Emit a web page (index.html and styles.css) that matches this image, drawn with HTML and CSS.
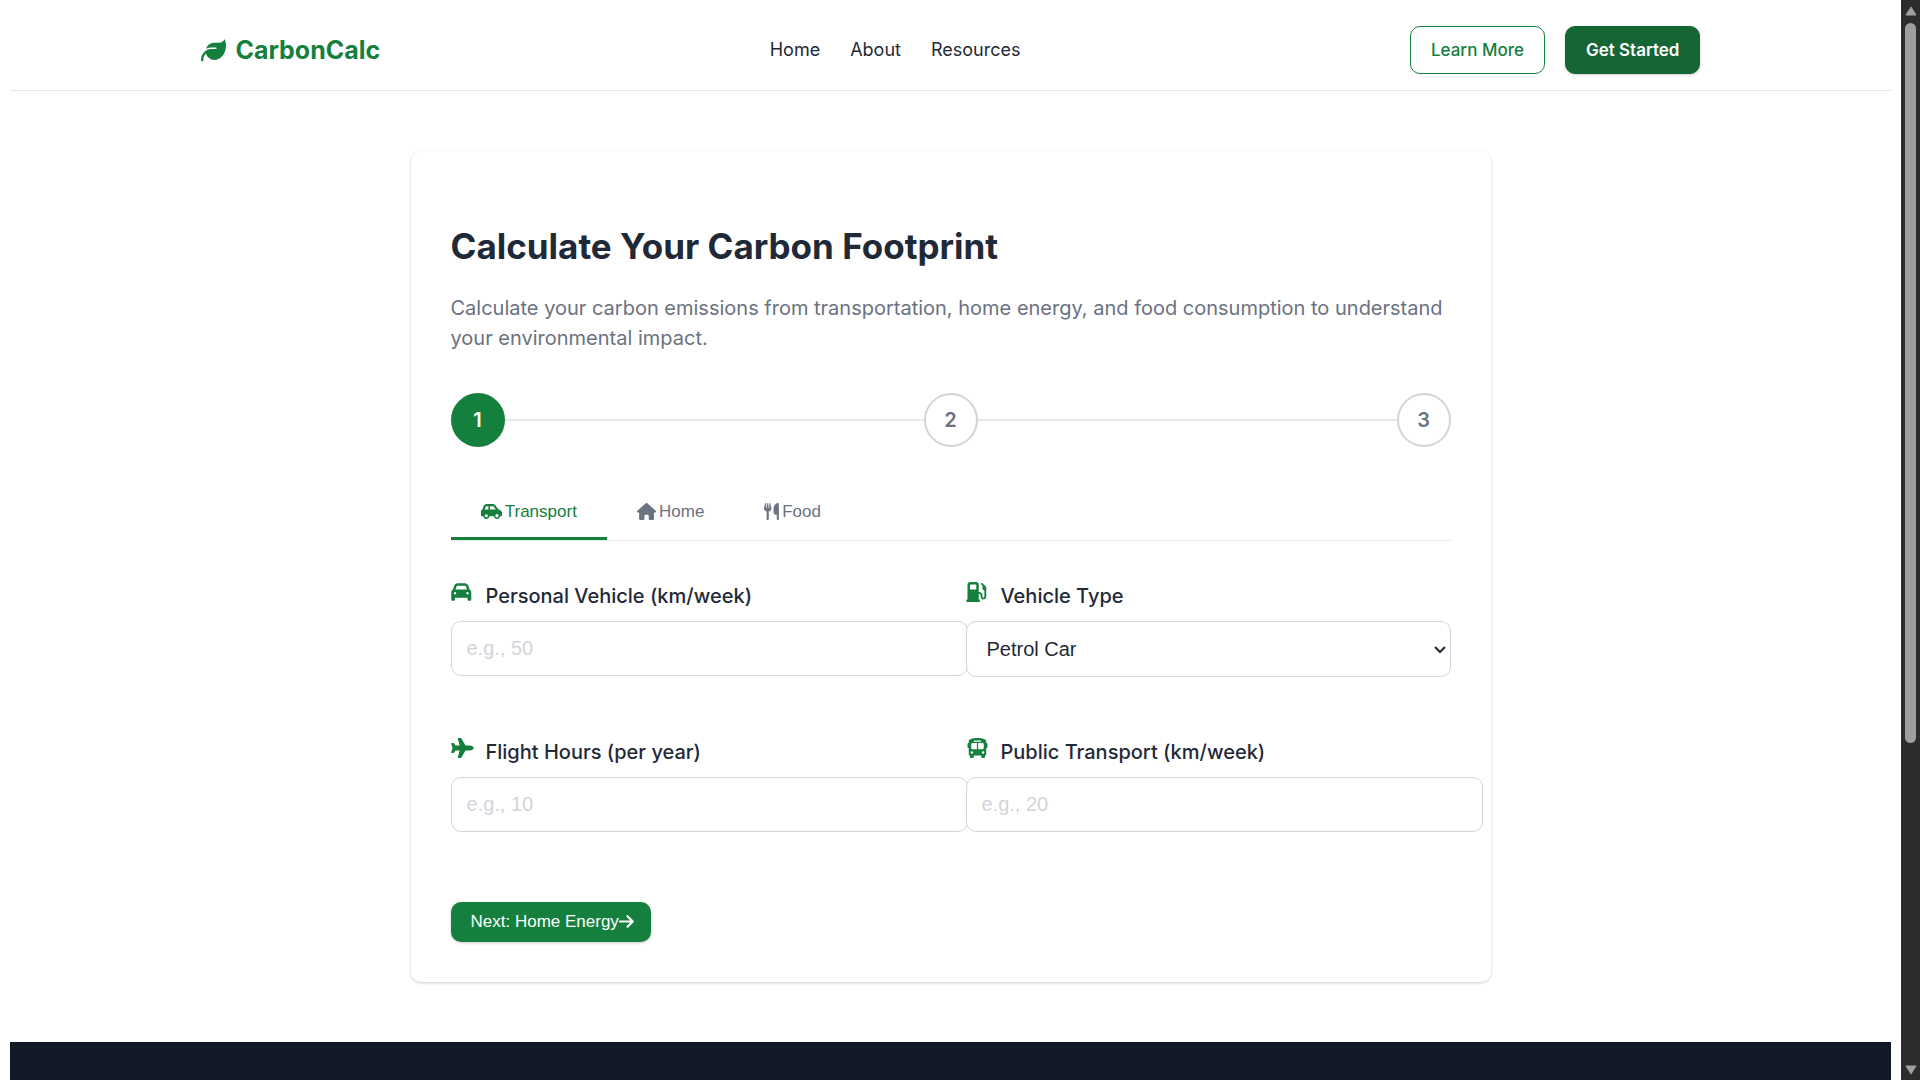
FILE: index.html
```html
<!DOCTYPE html>
<html lang="en">
<head>
<meta charset="utf-8">
<meta name="viewport" content="width=device-width, initial-scale=1">
<title>CarbonCalc</title>
<link rel="stylesheet" href="styles.css">
</head>
<body>
<div class="page">
  <header class="site-header">
    <div class="header-inner">
      <a class="logo" href="#">
        <svg class="logo-icon" viewBox="0 0 512 512" aria-hidden="true"><path d="M272 96c-78.6 0-145.1 51.5-167.7 122.5c33.6-17 71.5-26.5 111.7-26.5h88c8.8 0 16 7.2 16 16s-7.2 16-16 16H288 216s0 0 0 0c-16.6 0-32.7 1.9-48.3 5.4c-25.9 5.9-49.9 16.4-71.4 30.7c0 0 0 0 0 0C38.3 298.8 0 364.9 0 440v16c0 13.3 10.7 24 24 24s24-10.7 24-24V440c0-48.7 20.7-92.5 53.8-123.2C121.6 392.3 190.3 448 272 448l1 0c132.1-.7 239-130.9 239-291.4c0-42.6-7.5-83.1-21.1-119.6c-2.6-6.9-12.7-6.6-16.2-.1C455.9 72.1 418.7 96 376 96L272 96z"/></svg>
        <span>CarbonCalc</span>
      </a>
      <nav class="nav">
        <a href="#">Home</a>
        <a href="#">About</a>
        <a href="#">Resources</a>
      </nav>
      <div class="header-actions">
        <a class="action action-outline" href="#">Learn More</a>
        <a class="action action-solid" href="#">Get Started</a>
      </div>
    </div>
  </header>

  <main class="card">
    <h1>Calculate Your Carbon Footprint</h1>
    <p class="intro">Calculate your carbon emissions from transportation, home energy, and food consumption to understand your environmental impact.</p>

    <div class="steps">
      <span class="step step-active">1</span>
      <span class="step-line"></span>
      <span class="step">2</span>
      <span class="step-line"></span>
      <span class="step">3</span>
    </div>

    <div class="tabs" role="tablist">
      <button class="tab tab-active" type="button" role="tab" aria-selected="true">
        <svg class="tab-icon" viewBox="0 0 640 512" aria-hidden="true"><path d="M171.3 96H224v96H111.3l30.4-75.9C146.5 104 158.2 96 171.3 96zM272 192V96h81.2c9.7 0 18.9 4.4 25 12l67 84H272zm256.2 1L428.2 68c-18.2-22.8-45.8-36-75-36H171.3c-39.3 0-74.6 23.9-89.1 60.3L40.6 196.4C16.8 205.8 0 228.9 0 256V368c0 17.7 14.3 32 32 32H65.3c7.6 45.4 47.1 80 94.7 80s87.1-34.6 94.7-80H385.3c7.6 45.4 47.1 80 94.7 80s87.1-34.6 94.7-80H608c17.7 0 32-14.3 32-32V320c0-65.2-48.8-119-111.8-127zM434.7 368a48 48 0 1 1 90.5 32 48 48 0 1 1 -90.5-32zM160 336a48 48 0 1 1 0 96 48 48 0 1 1 0-96z"/></svg>
        <span>Transport</span>
      </button>
      <button class="tab" type="button" role="tab" aria-selected="false">
        <svg class="tab-icon" viewBox="0 0 576 512" aria-hidden="true"><path d="M575.8 255.5c0 18-15 32.1-32 32.1h-32l.7 160.2c0 2.7-.2 5.4-.5 8.1V472c0 22.1-17.9 40-40 40H456c-1.1 0-2.2 0-3.3-.1c-1.4 .1-2.8 .1-4.2 .1H416 392c-22.1 0-40-17.9-40-40V448 384c0-17.7-14.3-32-32-32H256c-17.7 0-32 14.3-32 32v64 24c0 22.1-17.9 40-40 40H160 128.1c-1.5 0-3-.1-4.5-.2c-1.2 .1-2.4 .2-3.6 .2H104c-22.1 0-40-17.9-40-40V360c0-.9 0-1.9 .1-2.8V287.6H32c-18 0-32-14-32-32.1c0-9 3-17 10-24L266.4 8c7-7 15-8 22-8s15 2 21 7L564.8 231.5c8 7 12 15 11 24z"/></svg>
        <span>Home</span>
      </button>
      <button class="tab" type="button" role="tab" aria-selected="false">
        <svg class="tab-icon" viewBox="0 0 448 512" aria-hidden="true"><path d="M416 0C400 0 288 32 288 176V288c0 35.3 28.7 64 64 64h32V480c0 17.7 14.3 32 32 32s32-14.3 32-32V352 240 32c0-17.7-14.3-32-32-32zM64 16C64 7.8 57.9 1 49.7 .1S34.2 4.6 32.4 12.5L2.1 148.8C.7 155.1 0 161.5 0 167.9c0 45.9 35.1 83.6 80 87.7V480c0 17.7 14.3 32 32 32s32-14.3 32-32V255.6c44.9-4.1 80-41.8 80-87.7c0-6.4-.7-12.8-2.1-19.1L191.6 12.5c-1.8-8-9.3-13.3-17.4-12.4S160 7.8 160 16V150.2c0 5.4-4.4 9.8-9.8 9.8c-5.1 0-9.3-3.9-9.8-9L127.9 14.6C127.2 6.3 120.3 0 112 0s-15.2 6.3-15.9 14.6L83.7 151c-.5 5.1-4.7 9-9.8 9c-5.4 0-9.8-4.4-9.8-9.8V16z"/></svg>
        <span>Food</span>
      </button>
    </div>

    <form>
      <div class="fields">
        <div class="field">
          <label for="vehicle-km">
            <svg class="field-icon" viewBox="0 0 576 512" aria-hidden="true"><path d="M135.2 117.4L109.1 192H402.9l-26.1-74.6C372.3 104.6 360.2 96 346.6 96H165.4c-13.6 0-25.7 8.6-30.2 21.4zM39.6 196.8L74.8 96.3C88.3 57.8 124.6 32 165.4 32H346.6c40.8 0 77.1 25.8 90.6 64.3l35.2 100.5c23.2 9.6 39.6 32.5 39.6 59.2V400v48c0 17.7-14.3 32-32 32H448c-17.7 0-32-14.3-32-32V400H96v48c0 17.7-14.3 32-32 32H32c-17.7 0-32-14.3-32-32V400 256c0-26.7 16.4-49.6 39.6-59.2zM128 288a32 32 0 1 0 -64 0 32 32 0 1 0 64 0zm288 32a32 32 0 1 0 0-64 32 32 0 1 0 0 64z"/></svg>
            <span>Personal Vehicle (km/week)</span>
          </label>
          <input id="vehicle-km" type="text" inputmode="numeric" placeholder="e.g., 50">
        </div>
        <div class="field">
          <label for="vehicle-type">
            <svg class="field-icon" viewBox="0 0 576 512" aria-hidden="true"><path d="M32 64C32 28.7 60.7 0 96 0H256c35.3 0 64 28.7 64 64V256h8c48.6 0 88 39.4 88 88v32c0 13.3 10.7 24 24 24s24-10.7 24-24V222c-27.6-7.1-48-32.2-48-62V96L384 64c-8.8-8.8-8.8-23.2 0-32s23.2-8.8 32 0l77.3 77.3c12 12 18.7 28.3 18.7 45.3V168v24 32V376c0 39.8-32.2 72-72 72s-72-32.2-72-72V344c0-22.1-17.9-40-40-40h-8V448c17.7 0 32 14.3 32 32s-14.3 32-32 32H32c-17.7 0-32-14.3-32-32s14.3-32 32-32V64zM96 80v96c0 8.8 7.2 16 16 16H240c8.8 0 16-7.2 16-16V80c0-8.8-7.2-16-16-16H112c-8.8 0-16 7.2-16 16z"/></svg>
            <span>Vehicle Type</span>
          </label>
          <div class="select-wrap">
            <select id="vehicle-type">
              <option>Petrol Car</option>
              <option>Diesel Car</option>
              <option>Electric Car</option>
            </select>
            <svg class="chevron" viewBox="0 0 12 8" aria-hidden="true"><path d="M1 1l5 5 5-5"/></svg>
          </div>
        </div>
        <div class="field">
          <label for="flight-hours">
            <svg class="field-icon" viewBox="0 0 576 512" aria-hidden="true"><path d="M482.3 192c34.2 0 93.7 29 93.7 64c0 36-59.5 64-93.7 64l-116.6 0L265.2 495.9c-5.7 10-16.3 16.1-27.8 16.1l-56.2 0c-10.6 0-18.3-10.2-15.4-20.4l49-171.6L112 320 68.8 377.6c-3 4-7.8 6.4-12.8 6.4l-42 0c-7.8 0-14-6.3-14-14c0-1.3 .2-2.6 .5-3.9L32 256 .5 145.9c-.4-1.3-.5-2.6-.5-3.9c0-7.8 6.3-14 14-14l42 0c5 0 9.8 2.4 12.8 6.4L112 192l102.9 0-49-171.6C162.9 10.2 170.6 0 181.2 0l56.2 0c11.5 0 22.1 6.2 27.8 16.1L365.7 192l116.6 0z"/></svg>
            <span>Flight Hours (per year)</span>
          </label>
          <input id="flight-hours" type="text" inputmode="numeric" placeholder="e.g., 10">
        </div>
        <div class="field">
          <label for="transit-km">
            <svg class="field-icon" viewBox="0 0 576 512" aria-hidden="true"><path d="M288 0C422.4 0 512 35.2 512 80V96l0 32c17.7 0 32 14.3 32 32v64c0 17.7-14.3 32-32 32l0 160c0 17.7-14.3 32-32 32v32c0 17.7-14.3 32-32 32H416c-17.7 0-32-14.3-32-32V448H192v32c0 17.7-14.3 32-32 32H128c-17.7 0-32-14.3-32-32l0-32c-17.7 0-32-14.3-32-32l0-160c-17.7 0-32-14.3-32-32V160c0-17.7 14.3-32 32-32h0V96h0V80C64 35.2 153.6 0 288 0zM128 160v96c0 17.7 14.3 32 32 32H272V128H160c-17.7 0-32 14.3-32 32zM304 288H416c17.7 0 32-14.3 32-32V160c0-17.7-14.3-32-32-32H304V288zM144 400a32 32 0 1 0 0-64 32 32 0 1 0 0 64zm288 0a32 32 0 1 0 0-64 32 32 0 1 0 0 64zM384 80c0-8.8-7.2-16-16-16H208c-8.8 0-16 7.2-16 16s7.2 16 16 16H368c8.8 0 16-7.2 16-16z"/></svg>
            <span>Public Transport (km/week)</span>
          </label>
          <input id="transit-km" type="text" inputmode="numeric" placeholder="e.g., 20">
        </div>
      </div>
      <button class="next" type="button">
        <span>Next: Home Energy</span>
        <svg class="next-icon" viewBox="0 0 448 512" aria-hidden="true"><path d="M438.6 278.6c12.5-12.5 12.5-32.8 0-45.3l-160-160c-12.5-12.5-32.8-12.5-45.3 0s-12.5 32.8 0 45.3L338.8 224 32 224c-17.7 0-32 14.3-32 32s14.3 32 32 32l306.7 0L233.4 393.4c-12.5 12.5-12.5 32.8 0 45.3s32.8 12.5 45.3 0l160-160z"/></svg>
      </button>
    </form>
  </main>

  <footer class="site-footer"></footer>
</div>
<div class="scrollbar" aria-hidden="true">
  <svg class="scroll-arrow" viewBox="0 0 12 10"><path d="M6 1L11 9H1z"/></svg>
  <div class="scroll-thumb"></div>
  <div class="scroll-rest"></div>
  <svg class="scroll-arrow" viewBox="0 0 12 10"><path d="M6 9L11 1H1z"/></svg>
</div>
</body>
</html>
```
FILE: styles.css
```css
:root {
  --green: #15803d;
  --green-dark: #166534;
  --ink: #1f2937;
  --muted: #6b7280;
  --line: #e5e7eb;
  --outline: #d1d5db;
  --ui: "Liberation Sans", Arial, sans-serif;
}

body {
  margin: 0;
  display: flex;
  min-height: 100vh;
  background: #fff;
  color: var(--ink);
  font: 20px/30px Inter, sans-serif;
}

a {
  color: inherit;
  text-decoration: none;
}

svg {
  fill: currentColor;
  flex: none;
}

.page {
  flex: 1;
  display: flex;
  flex-direction: column;
  min-width: 0;
  padding: 10px 10px 0;
}

/* Header */
.site-header {
  padding: 16px 20px;
  border-bottom: 1px solid var(--line);
}

.header-inner {
  display: flex;
  align-items: center;
  justify-content: space-between;
  max-width: 1500px;
  margin: 0 auto;
}

.logo {
  display: flex;
  align-items: center;
  gap: 10px;
  color: var(--green);
  font-size: 25px;
  font-weight: 700;
}

.logo-icon {
  width: 25px;
  height: 25px;
}

.nav {
  display: flex;
  gap: 30px;
  font-size: 18px;
}

.header-actions {
  display: flex;
  gap: 20px;
}

.action {
  padding: 8px 20px;
  border: 1px solid var(--green);
  border-radius: 10px;
  font-size: 17px;
  font-weight: 500;
}

.action-outline {
  color: var(--green);
}

.action-solid {
  border-color: var(--green-dark);
  background: var(--green-dark);
  color: #fff;
  font-weight: 600;
  box-shadow: 0 1px 3px rgba(0, 0, 0, 0.2);
}

/* Calculator card */
.card {
  box-sizing: border-box;
  width: 100%;
  max-width: 1080px;
  margin: 60px auto;
  padding: 40px;
  border-radius: 10px;
  box-shadow: 0 1px 3px rgba(0, 0, 0, 0.2);
}

h1 {
  margin: 28px 0 20px;
  font-size: 35px;
  line-height: 54px;
  font-weight: 700;
}

.intro {
  margin: 0 0 40px;
  color: var(--muted);
}

.steps {
  display: flex;
  align-items: center;
  margin-bottom: 40px;
}

.step {
  display: flex;
  align-items: center;
  justify-content: center;
  width: 50px;
  height: 50px;
  border: 2px solid var(--outline);
  border-radius: 50%;
  color: var(--muted);
  font-weight: 600;
}

.step-active {
  border-color: var(--green);
  background: var(--green);
  color: #fff;
}

.step-line {
  flex: 1;
  height: 2px;
  background: var(--line);
}

.tabs {
  display: flex;
  margin-bottom: 40px;
  border-bottom: 1px solid var(--line);
}

.tab {
  display: flex;
  align-items: center;
  gap: 3px;
  padding: 15px 30px;
  border: 0;
  border-bottom: 3px solid transparent;
  background: none;
  color: var(--muted);
  font: 17px/20px var(--ui);
}

.tab-active {
  border-bottom-color: var(--green);
  color: var(--green);
}

.tab-icon,
.next-icon {
  height: 17px;
  margin-bottom: 2px;
}

/* Form */
.fields {
  display: grid;
  grid-template-columns: 1fr 1fr;
  gap: 60px 30px;
  margin-bottom: 70px;
}

.field label {
  display: flex;
  align-items: center;
  gap: 12px;
  margin-bottom: 10px;
  font-weight: 500;
}

.field-icon {
  width: 23px;
  height: 20px;
  margin-bottom: 8px;
  color: var(--green);
}

.field input,
.field select {
  border: 1px solid var(--outline);
  border-radius: 10px;
  background: #fff;
  color: var(--ink);
  font: 20px/23px var(--ui);
}

.field input {
  display: block;
  box-sizing: content-box;
  width: 100%;
  height: 23px;
  padding: 15px;
}

.field input::placeholder {
  color: var(--outline);
  opacity: 1;
}

.select-wrap {
  position: relative;
}

.field select {
  display: block;
  appearance: none;
  box-sizing: border-box;
  width: 100%;
  height: 56px;
  padding: 0 20px;
}

.chevron {
  position: absolute;
  top: 25px;
  right: 5px;
  width: 12px;
  height: 8px;
  fill: none;
  stroke: var(--ink);
  stroke-width: 2;
  pointer-events: none;
}

.next {
  display: flex;
  align-items: center;
  height: 40px;
  padding: 0 17px 0 20px;
  border: 0;
  border-radius: 10px;
  background: var(--green);
  color: #fff;
  font: 17px/20px var(--ui);
  box-shadow: 0 1px 3px rgba(0, 0, 0, 0.2);
}

/* Footer */
.site-footer {
  flex: 1;
  background: #111827;
}

/* Window scrollbar */
.scrollbar {
  position: sticky;
  top: 0;
  box-sizing: border-box;
  display: flex;
  flex-direction: column;
  align-items: center;
  gap: 7px;
  width: 19px;
  height: 100vh;
  padding: 6px 0 5px;
  background: #2c2c2c;
  color: #9f9f9f;
}

.scroll-arrow {
  width: 12px;
  height: 10px;
  stroke: currentColor;
  stroke-width: 1;
  stroke-linejoin: round;
}

.scroll-thumb {
  flex: 7;
  width: 11px;
  border-radius: 6px;
  background: #9f9f9f;
}

.scroll-rest {
  flex: 3;
}
```
